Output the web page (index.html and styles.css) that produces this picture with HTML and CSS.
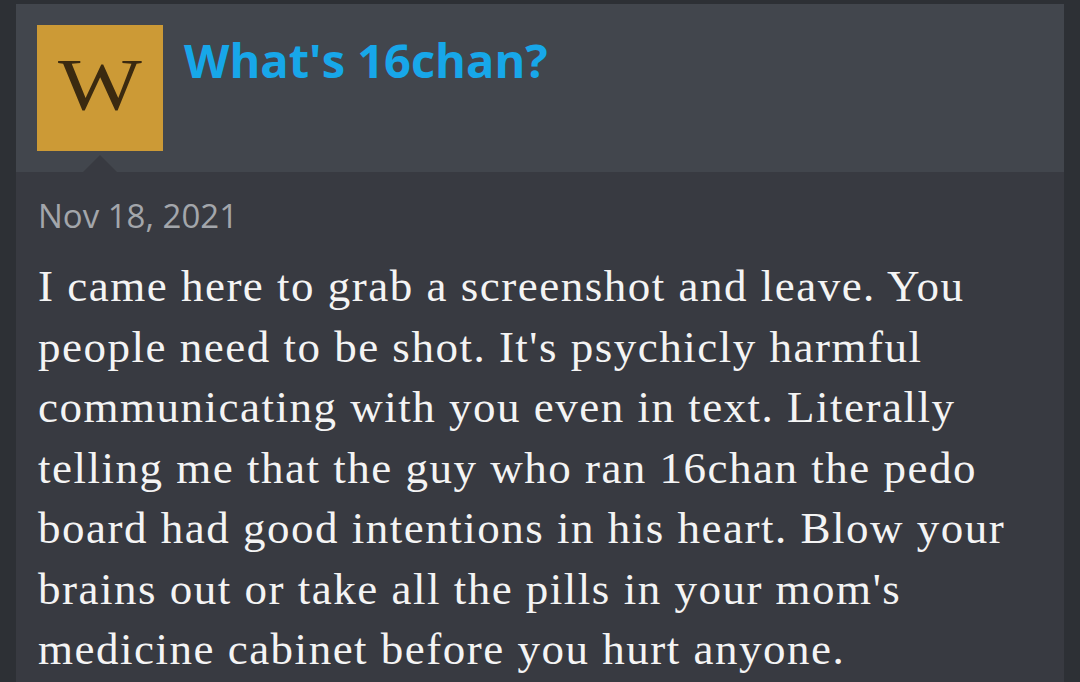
FILE: index.html
```html
<!DOCTYPE html>
<html>
  <head>
    <title>What's 16chan?</title>
    <link rel="stylesheet" href="styles.css">
  </head>
  <body>
    <div class="post">
      <div class="post-head">
        <div class="avatar"><span>W</span></div>
        <h2 class="post-title">What's 16chan?</h2>
      </div>
      <div class="post-body">
        <div class="post-date">Nov 18, 2021</div>
        <p class="post-text">
          I came here to grab a screenshot and leave. You people need to be
          shot. It's psychicly harmful communicating with you even in text.
          Literally telling me that the guy who ran 16chan the pedo board had
          good intentions in his heart. Blow your brains out or take all the
          pills in your mom's medicine cabinet before you hurt anyone.
        </p>
      </div>
    </div>
  </body>
</html>
```

FILE: styles.css
```css
html,
body {
  margin: 0;
  background-color: #2d3035;
}
body {
  padding: 4px 16px 0 16px;
  height: 678px;
  overflow: hidden;
}
.post {
  background-color: #383a41;
  height: 100%;
}
.post-head {
  display: flex;
  align-items: flex-start;
  gap: 21px;
  height: 168px;
  padding: 21px 0 0 21px;
  box-sizing: border-box;
  background-color: #42464d;
  position: relative;
}
.post-head::after {
  content: "";
  position: absolute;
  left: 67px;
  bottom: 0;
  border-left: 17px solid transparent;
  border-right: 17px solid transparent;
  border-bottom: 17px solid #383a41;
}
.avatar {
  width: 126px;
  height: 126px;
  background-color: #cc9a36;
  color: #3b2a10;
  font-family: "Liberation Serif", serif;
  font-size: 74px;
  line-height: 120px;
  text-align: center;
}
.avatar span {
  display: inline-block;
  transform: scaleX(1.2);
}
.post-title {
  margin: 7px 0 0 0;
  font-family: "Open Sans", sans-serif;
  font-weight: 700;
  font-size: 47px;
  color: #17a7e9;
  line-height: 56px;
}
.post-body {
  padding: 22px 20px 0 22px;
}
.post-date {
  font-family: "Open Sans", sans-serif;
  font-size: 33px;
  color: #a3a6ab;
  line-height: 44px;
}
.post-text {
  margin: 18px 0 0 0;
  font-family: "Liberation Serif", serif;
  font-size: 45px;
  letter-spacing: 1.5px;
  line-height: 60.5px;
  color: #f4f4f4;
}
```
